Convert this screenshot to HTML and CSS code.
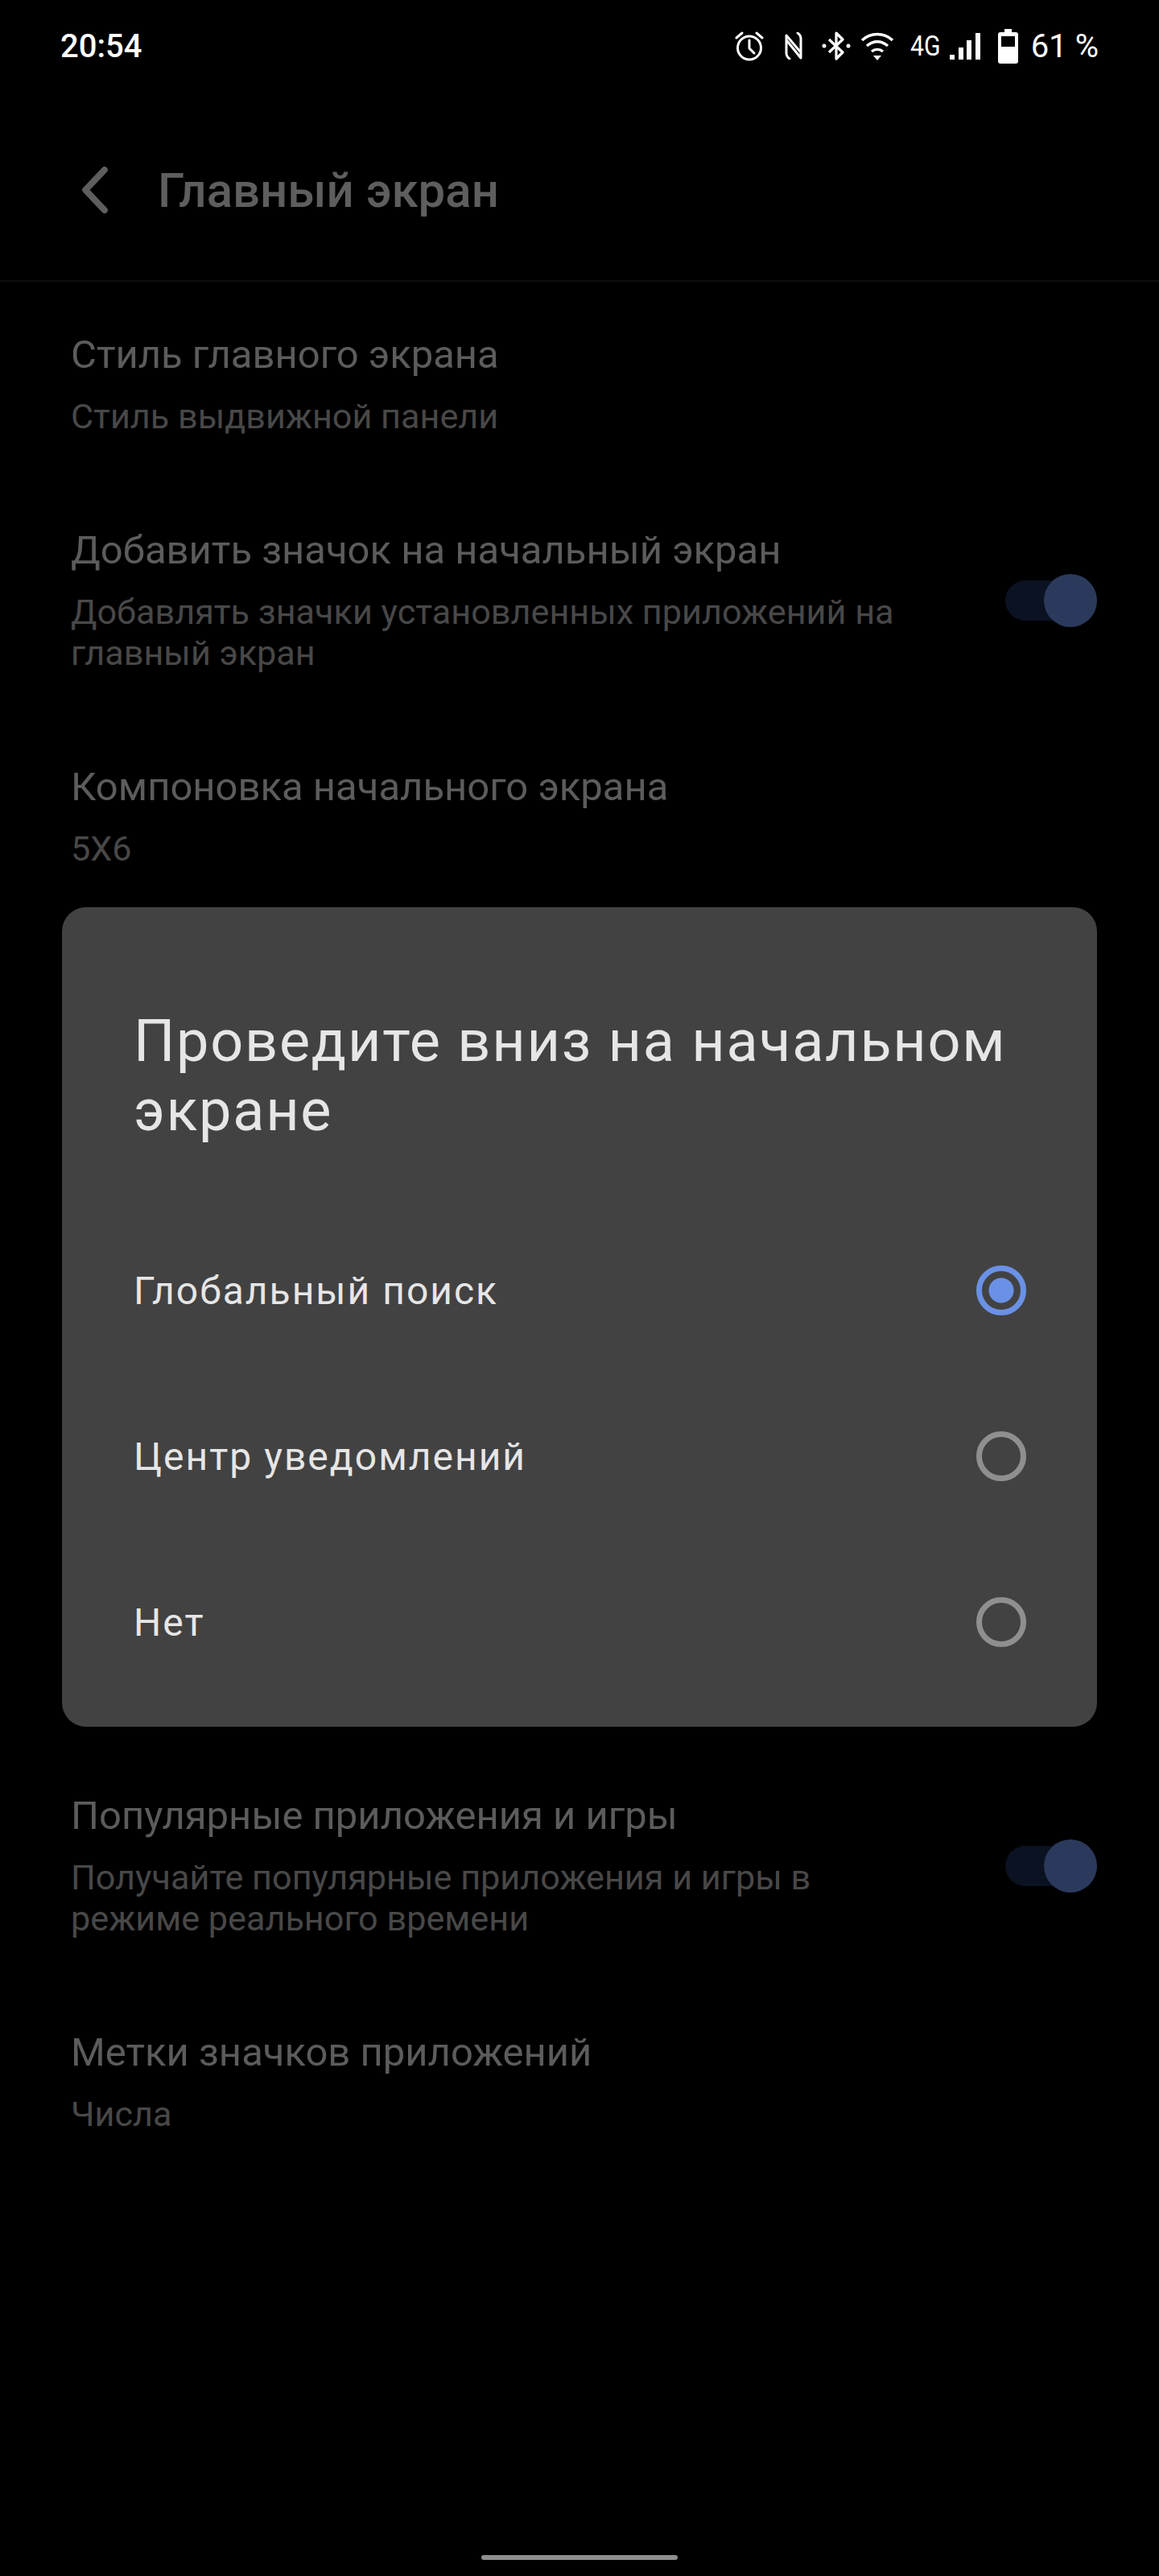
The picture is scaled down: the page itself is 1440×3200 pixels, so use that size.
FILE: index.html
```html
<!DOCTYPE html>
<html lang="ru">
<head>
    <meta charset="UTF-8">
    <meta name="viewport" content="width=device-width, initial-scale=1.0">
    <title>Главный экран</title>
    <link rel="stylesheet" href="styles.css">
</head>
<body>
    <!-- Строка состояния -->
    <div class="status-bar">
        <span class="status-time">20:54</span>
        <div class="status-icons">
            <svg class="ico-alarm" viewBox="0 0 36 38" fill="none" stroke="#fff" stroke-width="3" stroke-linecap="round" stroke-linejoin="round">
                <circle cx="18" cy="21.500" r="14.500"/>
                <path d="M18 12v10l6 6"/>
                <path d="M2 9l7-6M34 9l-7-6"/>
            </svg>
            <svg class="ico-nfc" viewBox="0 0 22 34" fill="none" stroke="#fff" stroke-width="3" stroke-linecap="round" stroke-linejoin="round">
                <path d="M6 33c-3-2-4-4-4-7V4l17 20"/>
                <path d="M16 1c3 2 4 4 4 7v24L3 11"/>
            </svg>
            <svg class="ico-bt" viewBox="0 0 36 36" fill="none" stroke="#fff" stroke-width="3.200" stroke-linejoin="round">
                <path d="M9 10l17 16-8 8V2l8 8-17 16"/>
                <circle cx="3" cy="18" r="2.500" fill="#fff" stroke="none"/>
                <circle cx="33" cy="18" r="2.500" fill="#fff" stroke="none"/>
            </svg>
            <svg class="ico-wifi" viewBox="0 0 42 36" fill="none" stroke="#fff" stroke-width="3.400">
                <path d="M2 11C13 1 29 1 40 11"/>
                <path d="M8 18c8-7 18-7 26 0"/>
                <path d="M14 25c4-3.500 10-3.500 14 0"/>
                <path d="M16 30h10l-5 6z" fill="#fff" stroke="none"/>
            </svg>
            <span class="status-4g">4G</span>
            <div class="signal">
                <i class="bar b1"></i>
                <i class="bar b2"></i>
                <i class="bar b3"></i>
                <i class="bar b4"></i>
            </div>
            <svg class="ico-batt" viewBox="0 0 25 43">
                <path d="M8 0h9v4h5a3 3 0 0 1 3 3v33a3 3 0 0 1-3 3H3a3 3 0 0 1-3-3V7a3 3 0 0 1 3-3h5z" fill="#fff"/>
                <rect x="4" y="9" width="17" height="13" fill="#000"/>
            </svg>
            <span class="status-pct">61 %</span>
        </div>
    </div>

    <!-- Шапка -->
    <div class="header">
        <svg class="back" viewBox="0 0 26 44" fill="none" stroke="#5e5e5e" stroke-width="6" stroke-linecap="round" stroke-linejoin="round">
            <path d="M22 3L4 22l18 19"/>
        </svg>
        <h1 class="header-title">Главный экран</h1>
    </div>

    <!-- Настройки -->
    <div class="list">
        <div class="row">
            <div class="row-text">
                <div class="row-title">Стиль главного экрана</div>
                <div class="row-sub">Стиль выдвижной панели</div>
            </div>
        </div>
        <div class="row">
            <div class="row-text">
                <div class="row-title">Добавить значок на начальный экран</div>
                <div class="row-sub">Добавлять значки установленных приложений на главный экран</div>
            </div>
            <div class="switch"><div class="switch-knob"></div></div>
        </div>
        <div class="row">
            <div class="row-text">
                <div class="row-title">Компоновка начального экрана</div>
                <div class="row-sub">5X6</div>
            </div>
        </div>
        <div class="row row-after-dialog">
            <div class="row-text">
                <div class="row-title">Популярные приложения и игры</div>
                <div class="row-sub">Получайте популярные приложения и игры в режиме реального времени</div>
            </div>
            <div class="switch"><div class="switch-knob"></div></div>
        </div>
        <div class="row">
            <div class="row-text">
                <div class="row-title">Метки значков приложений</div>
                <div class="row-sub">Числа</div>
            </div>
        </div>
    </div>

    <!-- Диалог -->
    <div class="dialog">
        <h2 class="dialog-title">Проведите вниз на начальном экране</h2>
        <div class="option">
            <span>Глобальный поиск</span>
            <div class="radio checked"></div>
        </div>
        <div class="option">
            <span>Центр уведомлений</span>
            <div class="radio"></div>
        </div>
        <div class="option">
            <span>Нет</span>
            <div class="radio"></div>
        </div>
    </div>

    <div class="home-bar"></div>
</body>
</html>
```
FILE: styles.css
```css
* {
    box-sizing: border-box;
}

html, body {
    margin: 0;
    background-color: #000;
}

body {
    position: relative;
    height: 3200px;
    overflow: hidden;
    font-family: Roboto, "Noto Sans", sans-serif;
}

/* Строка состояния */
.status-bar {
    display: flex;
    justify-content: space-between;
    align-items: center;
    height: 114px;
    padding: 0 75px 0 75px;
    color: #fff;
}

.status-time {
    font-size: 40px;
    font-weight: 500;
}

.status-icons {
    display: flex;
    align-items: center;
}

.ico-alarm { width: 36px; height: 38px; margin-right: 26px; }
.ico-nfc { width: 22px; height: 34px; margin-right: 24px; }
.ico-bt { width: 36px; height: 36px; margin-right: 12px; }
.ico-wifi { width: 42px; height: 36px; margin-right: 20px; }
.ico-batt { width: 25px; height: 43px; margin-right: 16px; }

.status-4g {
    width: 37px;
    margin-right: 12px;
    font-size: 35px;
    transform: scaleX(0.86);
    transform-origin: left center;
}

.status-pct {
    font-size: 40px;
    font-weight: 400;
}

.signal {
    display: flex;
    align-items: flex-end;
    gap: 4.600px;
    height: 33px;
    margin-right: 22px;
}

.bar {
    display: block;
    width: 6px;
    background-color: #fff;
}

.b1 { height: 6px; }
.b2 { height: 15px; }
.b3 { height: 24px; }
.b4 { height: 33px; }

/* Шапка */
.header {
    display: flex;
    align-items: center;
    height: 236px;
    padding: 10px 0 0 98px;
    border-bottom: 2px solid #0d0d0d;
}

.back {
    width: 40px;
    height: 58px;
    margin-right: 58px;
}

.header-title {
    margin: 0;
    font-size: 60px;
    font-weight: 500;
    color: #5e5e5e;
}

/* Настройки */
.list {
    padding: 0 77px 0 88px;
}

.row {
    display: flex;
    align-items: center;
    justify-content: space-between;
    padding: 61px 0 50px;
}

.row-text {
    width: 1040px;
}

.row-title {
    font-size: 49px;
    line-height: 60px;
    color: #5c5c5c;
}

.row-sub {
    margin-top: 21px;
    font-size: 43.200px;
    line-height: 51px;
    color: #484848;
}

.row-after-dialog {
    margin-top: 1035px;
}

.switch {
    position: relative;
    width: 114px;
    height: 50px;
    border-radius: 25px;
    background-color: #0b1222;
}

.switch-knob {
    position: absolute;
    top: -8px;
    right: 0;
    width: 66px;
    height: 66px;
    border-radius: 50%;
    background-color: #2b3a5c;
}

/* Диалог */
.dialog {
    position: absolute;
    top: 1127px;
    left: 77px;
    width: 1286px;
    height: 1018px;
    padding: 124px 88px 0 89px;
    border-radius: 30px;
    background-color: #424242;
}

.dialog-title {
    margin: 0 0 77px;
    font-size: 72px;
    font-weight: 400;
    line-height: 86px;
    letter-spacing: 1.720px;
    color: #e6e6e6;
}

.option {
    display: flex;
    align-items: center;
    justify-content: space-between;
    height: 206px;
    font-size: 48px;
    letter-spacing: 2px;
    color: #e6e6e6;
}

.radio {
    width: 62px;
    height: 62px;
    border: 7px solid #8f8f8f;
    border-radius: 50%;
}

.radio.checked {
    border-color: #6a91e6;
    background: radial-gradient(circle, #6a91e6 0 15px, transparent 16px);
}

.home-bar {
    position: absolute;
    left: 598px;
    bottom: 20px;
    width: 244px;
    height: 6px;
    border-radius: 3px;
    background-color: #8f8f8f;
}
```
